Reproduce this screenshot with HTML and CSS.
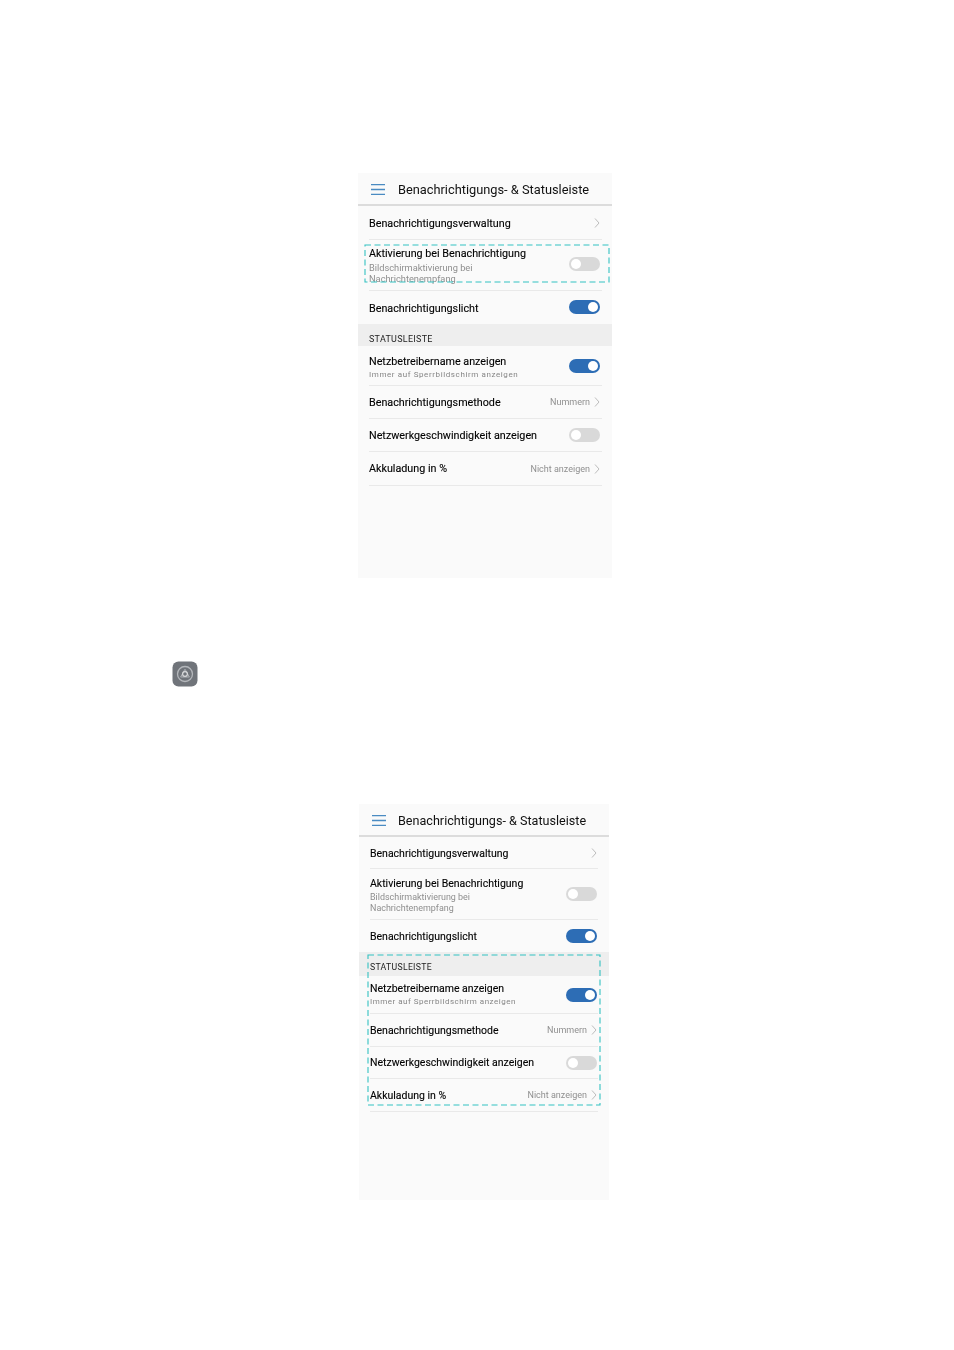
FILE: index.html
```html
<!DOCTYPE html>
<html lang="de">
<head>
<meta charset="utf-8">
<title>Benachrichtigungs- &amp; Statusleiste</title>
<link rel="stylesheet" href="styles.css">
</head>
<body>
<main class="page">
  <section class="screen screen-a">
    <header class="bar">
      <svg class="menu" viewBox="0 0 14 11"><path d="M0 .7H14M0 5.5H14M0 10.3H14"/></svg>
      <h1 class="title">Benachrichtigungs- &amp; Statusleiste</h1>
    </header>
    <div class="row r1"><span class="label">Benachrichtigungsverwaltung</span><svg class="chev" viewBox="0 0 6 10"><path d="M1 .5 5 5 1 9.5"/></svg></div>
    <div class="row r2">
      <div class="text"><span class="label">Aktivierung bei Benachrichtigung</span><span class="sub">Bildschirmaktivierung bei<br>Nachrichtenempfang</span></div>
      <span class="toggle"></span>
    </div>
    <div class="row r3 last"><span class="label">Benachrichtigungslicht</span><span class="toggle on"></span></div>
    <div class="section">STATUSLEISTE</div>
    <div class="row r4">
      <div class="text"><span class="label">Netzbetreibername anzeigen</span><span class="sub wide">Immer auf Sperrbildschirm anzeigen</span></div>
      <span class="toggle on"></span>
    </div>
    <div class="row r5"><span class="label">Benachrichtigungsmethode</span><span class="value">Nummern</span><svg class="chev" viewBox="0 0 6 10"><path d="M1 .5 5 5 1 9.5"/></svg></div>
    <div class="row r6"><span class="label">Netzwerkgeschwindigkeit anzeigen</span><span class="toggle"></span></div>
    <div class="row r7"><span class="label">Akkuladung in %</span><span class="value">Nicht anzeigen</span><svg class="chev" viewBox="0 0 6 10"><path d="M1 .5 5 5 1 9.5"/></svg></div>
    <svg class="mark mark-a"><rect width="100%" height="100%"/></svg>
  </section>

  <div class="app-icon">
    <svg viewBox="0 0 26 26">
      <rect x=".5" y=".5" width="25" height="25" rx="6" fill="#70747a"/>
      <circle cx="13" cy="13" r="7.5" fill="none" stroke="#b4b7bb" stroke-width="1.3"/>
      <path d="M13 8.2 17.4 16H8.6Z" fill="none" stroke="#aeb1b5" stroke-width="1"/>
      <circle cx="13" cy="13" r="2.4" fill="none" stroke="#d8d9db" stroke-width="1.2"/>
    </svg>
  </div>

  <section class="screen screen-b">
    <header class="bar">
      <svg class="menu" viewBox="0 0 14 11"><path d="M0 .7H14M0 5.5H14M0 10.3H14"/></svg>
      <h1 class="title">Benachrichtigungs- &amp; Statusleiste</h1>
    </header>
    <div class="row r1"><span class="label">Benachrichtigungsverwaltung</span><svg class="chev" viewBox="0 0 6 10"><path d="M1 .5 5 5 1 9.5"/></svg></div>
    <div class="row r2">
      <div class="text"><span class="label">Aktivierung bei Benachrichtigung</span><span class="sub">Bildschirmaktivierung bei<br>Nachrichtenempfang</span></div>
      <span class="toggle"></span>
    </div>
    <div class="row r3 last"><span class="label">Benachrichtigungslicht</span><span class="toggle on"></span></div>
    <div class="section">STATUSLEISTE</div>
    <div class="row r4">
      <div class="text"><span class="label">Netzbetreibername anzeigen</span><span class="sub wide">Immer auf Sperrbildschirm anzeigen</span></div>
      <span class="toggle on"></span>
    </div>
    <div class="row r5"><span class="label">Benachrichtigungsmethode</span><span class="value">Nummern</span><svg class="chev" viewBox="0 0 6 10"><path d="M1 .5 5 5 1 9.5"/></svg></div>
    <div class="row r6"><span class="label">Netzwerkgeschwindigkeit anzeigen</span><span class="toggle"></span></div>
    <div class="row r7"><span class="label">Akkuladung in %</span><span class="value">Nicht anzeigen</span><svg class="chev" viewBox="0 0 6 10"><path d="M1 .5 5 5 1 9.5"/></svg></div>
    <svg class="mark mark-b"><rect width="100%" height="100%"/></svg>
  </section>
</main>
</body>
</html>
```

FILE: styles.css
```css
* { box-sizing: border-box; }
html, body { margin: 0; background: #fff; }
.page {
  display: flex;
  flex-direction: column;
  align-items: flex-start;
  height: 1350px;
  padding-top: 173px;
  font-family: Roboto, "Liberation Sans", sans-serif;
  color: #111;
  overflow: hidden;
}
.screen {
  position: relative;
  display: flex;
  flex-direction: column;
  background: #fafafa;
}
.screen-a { width: 254px; height: 405px; margin-left: 358px; }
.screen-b { width: 250px; height: 396px; margin-left: 359px; margin-top: 117px; }
.app-icon { width: 26px; height: 26px; margin: 83px 0 0 172px; filter: blur(.5px); }
.app-icon svg { display: block; width: 26px; height: 26px; }

.bar {
  display: flex;
  align-items: center;
  height: 33px;
  padding: 2px 0 0 13px;
  border-bottom: 2px solid #dcdcdc;
  flex: none;
}
.screen-b .bar { padding-top: 1px; }
.menu { width: 14px; height: 11px; fill: none; stroke: #4a8bc2; stroke-width: 1.3; flex: none; }
.title { margin: 0 0 0 13px; font-weight: 400; color: #111; white-space: nowrap; filter: blur(.25px); }
.screen-a .title { font-size: 12.8px; }
.screen-b .title { font-size: 12.6px; margin-left: 12px; }

.row {
  display: flex;
  align-items: center;
  border-bottom: 1px solid #e9e9e9;
  flex: none;
}
.screen-a .row { margin: 0 10px 0 11px; }
.screen-b .row { margin: 0 11px; }
.row.last { border-bottom: 0; }
.label, .sub, .value, .section { filter: blur(.25px); }
.label { color: #000; white-space: nowrap; -webkit-text-stroke: .12px #000; }
.screen-a .label { font-size: 10.75px; }
.screen-b .label { font-size: 10.5px; }
.r1 .label { padding-top: 1px; }
.text { display: flex; flex-direction: column; align-items: flex-start; }
.sub { line-height: 11px; color: #8e8e8e; margin-top: 2px; white-space: nowrap; }
.screen-a .sub { font-size: 9.25px; }
.screen-b .sub { font-size: 8.95px; }
.screen-a .sub.wide, .screen-b .sub.wide { font-size: 8px; color: #858585; margin-top: 1px; }
.screen-a .sub.wide { letter-spacing: .6px; }
.screen-b .sub.wide { letter-spacing: .5px; }
.value { font-size: 9px; color: #8f8f8f; margin-left: auto; margin-right: 4px; }
.chev { width: 6px; height: 10px; fill: none; stroke: #bdbdbd; stroke-width: 1; margin-left: auto; flex: none; }
.value + .chev { margin-left: 0; }
.screen-a .chev, .screen-a .toggle { margin-right: 2px; }
.screen-b .chev, .screen-b .toggle { margin-right: 1px; }
.toggle {
  position: relative;
  width: 31px;
  height: 14px;
  margin-left: auto;
  border-radius: 7px;
  background: #d9d9d9;
  flex: none;
}
.toggle::after {
  content: "";
  position: absolute;
  top: 2px;
  left: 2px;
  width: 10px;
  height: 10px;
  border-radius: 50%;
  background: #fff;
}
.toggle.on { background: #2d6db5; }
.toggle.on::after { left: 19px; }
.section {
  display: flex;
  align-items: flex-end;
  padding: 0 11px 2px;
  background: #eeeeee;
  letter-spacing: .3px;
  color: #222;
  flex: none;
}
.screen-a .section { height: 22px; font-size: 8.95px; }
.screen-b .section { height: 24px; padding-bottom: 4px; font-size: 8.7px; }

.screen-a .r1 { height: 34px; }
.screen-a .r2 { height: 51px; }
.screen-a .r2 .toggle, .screen-a .r3 .toggle { margin-bottom: 2px; }
.screen-a .r3 { height: 33px; }
.screen-a .r3 .label { padding-top: 2px; }
.screen-a .r4 { height: 40px; }
.screen-a .r4 .text { padding-top: 4px; }
.screen-a .r5 { height: 33px; }
.screen-a .r6 { height: 33px; }
.screen-a .r7 { height: 34px; }
.screen-b .r1 { height: 32px; }
.screen-b .r2 { height: 51px; }
.screen-b .r2 .text { padding-top: 2px; }
.screen-b .r3 { height: 32px; }
.screen-b .r3 .label { padding-top: 1px; }
.screen-b .r4 { height: 38px; }
.screen-b .r5 { height: 33px; }
.screen-b .r6 { height: 32px; }
.screen-b .r7 { height: 33px; }

.mark {
  position: absolute;
  overflow: visible;
  fill: none;
  stroke: #33c2c2;
  stroke-width: 1.1;
  stroke-dasharray: 6 3.5;
}
.mark-a { left: 7px; top: 72px; width: 244px; height: 37px; }
.mark-b { left: 8.5px; top: 150.5px; width: 232px; height: 150px; }
```
